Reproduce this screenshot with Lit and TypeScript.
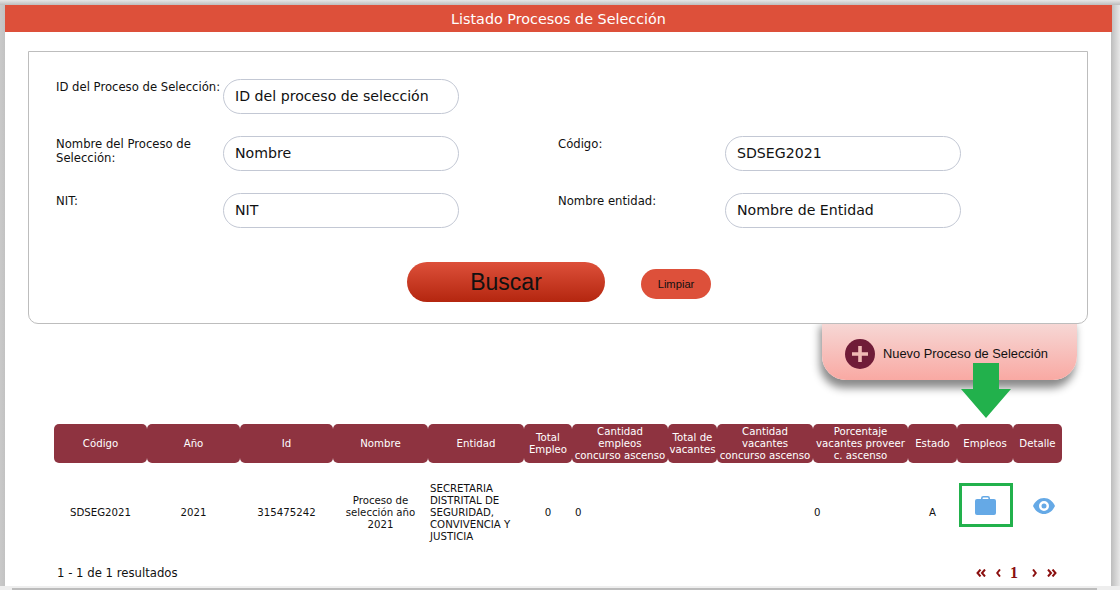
import { LitElement, html, css } from "lit";
import { customElement } from "lit/decorators.js";

const HEAD: [string, number][] = [
  ["Código", 93], ["Año", 93], ["Id", 93], ["Nombre", 95], ["Entidad", 96],
  ["Total\nEmpleo", 48], ["Cantidad\nempleos\nconcurso ascenso", 96], ["Total de\nvacantes", 49],
  ["Cantidad\nvacantes\nconcurso ascenso", 96], ["Porcentaje\nvacantes proveer\nc. ascenso", 95],
  ["Estado", 49], ["Empleos", 56], ["Detalle", 49],
];

@customElement("app-root")
export class AppRoot extends LitElement {
  static styles = css`
    :host { display: block; width: 1120px; height: 590px; overflow: hidden; background: #eeeeee; font-family: "DejaVu Sans", sans-serif; color: #111; position: relative; }
    .shell { height: 586px; overflow: hidden; box-sizing: border-box; padding: 5px 0 0 5px;
      background:
        linear-gradient(#e6e6e6, #bdbdbd) 0 0 / 100% 5px no-repeat,
        linear-gradient(90deg, #c9c9c9 0, #c2c2c2 5px, #bdbdbd 1111px, #e8e8e8 1120px); }
    .track { height: 4px; box-sizing: border-box; padding: 2px 23px 0 12px; }
    .thumb { height: 2px; background: #bcbcbc; }
    .page { position: relative; width: 1106px; height: 581px; background: #fff; }
    .title { height: 27px; margin-right: -1px; background: #dd503a; color: #fff; text-align: center; font: 14.35px/28px "DejaVu Sans", sans-serif; }
    .search { box-sizing: border-box; position: relative; z-index: 2; margin: 19px 0 0 23px; width: 1060px; height: 273px; background: #fff; border: 1px solid #bdbdbd; border-radius: 0 0 10px 10px; padding: 27px 27px 0; }
    .grid { display: grid; grid-template-columns: 167px 335px 167px 236px; grid-auto-rows: 57px; }
    label { font: 11.65px/14px "DejaVu Sans", sans-serif; padding-top: 1px; }
    .field { box-sizing: border-box; width: 236px; height: 35px; border: 1px solid #c3c8d4; border-radius: 18px; padding: 0 11px; font: 14.15px/33px "DejaVu Sans", sans-serif; }
    .actions { display: flex; align-items: center; margin: 12px 0 0 351px; }
    .buscar { width: 198px; height: 40px; border-radius: 20px; background: linear-gradient(#dd503a, #b4260f); font: 23px/40px "Liberation Sans", sans-serif; text-align: center; color: #111; }
    .limpiar { width: 70px; height: 30px; margin: 4px 0 0 36px; border-radius: 15px; background: #dd503a; font: 11.2px/30px "Liberation Sans", sans-serif; text-align: center; color: #111; }
    .nuevo { box-sizing: border-box; display: flex; align-items: center; gap: 8px; margin: -6px 0 0 817px; width: 255px; height: 62px; padding: 9px 0 0 23px; border-radius: 0 0 24px 24px; background: linear-gradient(#f6dcda, #f9a9a3); box-shadow: -2px 8px 8px #8a8a8a; font: 12.85px "Liberation Sans", sans-serif; color: #111; position: relative; z-index: 1; }
    .plus { width: 30px; height: 30px; flex: none; }
    table { border-collapse: separate; border-spacing: 0; table-layout: fixed; margin: 44px 0 0 49px; width: 1008px; font: 10.2px/12px "DejaVu Sans", sans-serif; }
    th { height: 39px; padding: 0; background: #8e3340; color: #fff; font-weight: 400; border-radius: 5px; text-align: center; white-space: pre-line; }
    td { height: 99px; padding: 0; text-align: center; vertical-align: middle; }
    td.ent { text-align: left; padding-left: 2px; }
    td.l3 { text-align: left; padding-left: 3px; }
    td.l1 { text-align: left; padding-left: 1px; }
    td.act { vertical-align: top; height: auto; line-height: 0; }
    td.brief { padding-top: 33px; }
    td.eye { padding: 35px 0 0 12px; box-sizing: border-box; }
    .foot { display: flex; justify-content: space-between; align-items: center; margin: 4px 0 0 52px; width: 1000px; font: 11.7px/14px "DejaVu Sans", sans-serif; }
    .pager { display: flex; align-items: center; color: #8b0f0f; font: bold 16px/14px "Liberation Serif", serif; }
    .pager svg { display: block; }
    .g9 { margin-left: 9px; }
    .g10 { margin-left: 10px; }
    .g14 { margin-left: 14px; }
    .arrow { position: absolute; left: 956px; top: 358px; z-index: 3; }
    .mark { position: absolute; left: 954px; top: 478px; width: 48px; height: 38px; border: 3px solid #22b14c; }
  `;

  render() {
    return html`
      <div class="shell">
      <div class="page">
        <div class="title">Listado Procesos de Selección</div>
        <div class="search">
          <div class="grid">
            <label>ID del Proceso de Selección:</label>
            <div class="field">ID del proceso de selección</div>
            <span></span><span></span>
            <label>Nombre del Proceso de Selección:</label>
            <div class="field">Nombre</div>
            <label>Código:</label>
            <div class="field">SDSEG2021</div>
            <label>NIT:</label>
            <div class="field">NIT</div>
            <label>Nombre entidad:</label>
            <div class="field">Nombre de Entidad</div>
          </div>
          <div class="actions">
            <div class="buscar">Buscar</div>
            <div class="limpiar">Limpiar</div>
          </div>
        </div>
        <div class="nuevo">
          <svg class="plus" viewBox="0 0 30 30"><circle cx="15" cy="15" r="15" fill="#701c38"/><path d="M15 7v16M7 15h16" stroke="#f0b9b5" stroke-width="3.6"/></svg>
          Nuevo Proceso de Selección
        </div>
        <table>
          <colgroup>${HEAD.map(([, w]) => html`<col style="width:${w}px" />`)}</colgroup>
          <thead><tr>${HEAD.map(([t]) => html`<th>${t}</th>`)}</tr></thead>
          <tbody><tr>
            <td>SDSEG2021</td><td>2021</td><td>315475242</td>
            <td>Proceso de<br />selección año<br />2021</td>
            <td class="ent">SECRETARIA DISTRITAL DE SEGURIDAD, CONVIVENCIA Y JUSTICIA</td>
            <td>0</td><td class="l3">0</td><td></td><td></td><td class="l1">0</td><td>A</td>
            <td class="act brief"><svg width="21" height="19" viewBox="0 0 21 19"><path fill="none" stroke="#65a9e6" stroke-width="1.6" d="M6.800 4V2.300a1.500 1.500 0 0 1 1.500-1.500h4.400a1.500 1.500 0 0 1 1.500 1.500V4"/><rect y="3" width="21" height="16" rx="2" fill="#65a9e6"/></svg></td>
            <td class="act eye"><svg width="22" height="16" viewBox="0 0 22 16"><path fill="#65a9e6" fill-rule="evenodd" d="M11 0C16 0 20 3.500 22 8c-2 4.500-6 8-11 8S2 12.500 0 8C2 3.500 6 0 11 0zm0 3a5 5 0 1 0 0 10 5 5 0 0 0 0-10zm0 2.500a2.500 2.500 0 1 1 0 5 2.500 2.500 0 0 1 0-5z"/></svg></td>
          </tr></tbody>
        </table>
        <div class="foot">
          <span>1 - 1 de 1 resultados</span>
          <div class="pager">
            <svg width="10" height="8" viewBox="0 0 10 8" fill="none" stroke="#8b0f0f" stroke-width="2"><path d="M4.500 .5 1.500 4l3 3.500M9 .5 6 4l3 3.500"/></svg>
            <svg class="g10" width="5" height="8" viewBox="0 0 5 8" fill="none" stroke="#8b0f0f" stroke-width="2"><path d="M4 .5 1.200 4 4 7.500"/></svg>
            <span class="g9">1</span>
            <svg class="g14" width="5" height="8" viewBox="0 0 5 8" fill="none" stroke="#8b0f0f" stroke-width="2"><path d="M1 .5 3.800 4 1 7.500"/></svg>
            <svg class="g10" width="10" height="8" viewBox="0 0 10 8" fill="none" stroke="#8b0f0f" stroke-width="2"><path d="M1 .5 4 4 1 7.500M5.500 .5l3 3.500-3 3.500"/></svg>
          </div>
        </div>
        <svg class="arrow" width="50" height="55" viewBox="0 0 50 55"><path fill="#22b14c" d="M12 0h26v26h12L25 55 0 26h12z"/></svg>
        <div class="mark"></div>
      </div>
      </div>
      <div class="track"><div class="thumb"></div></div>
    `;
  }
}
